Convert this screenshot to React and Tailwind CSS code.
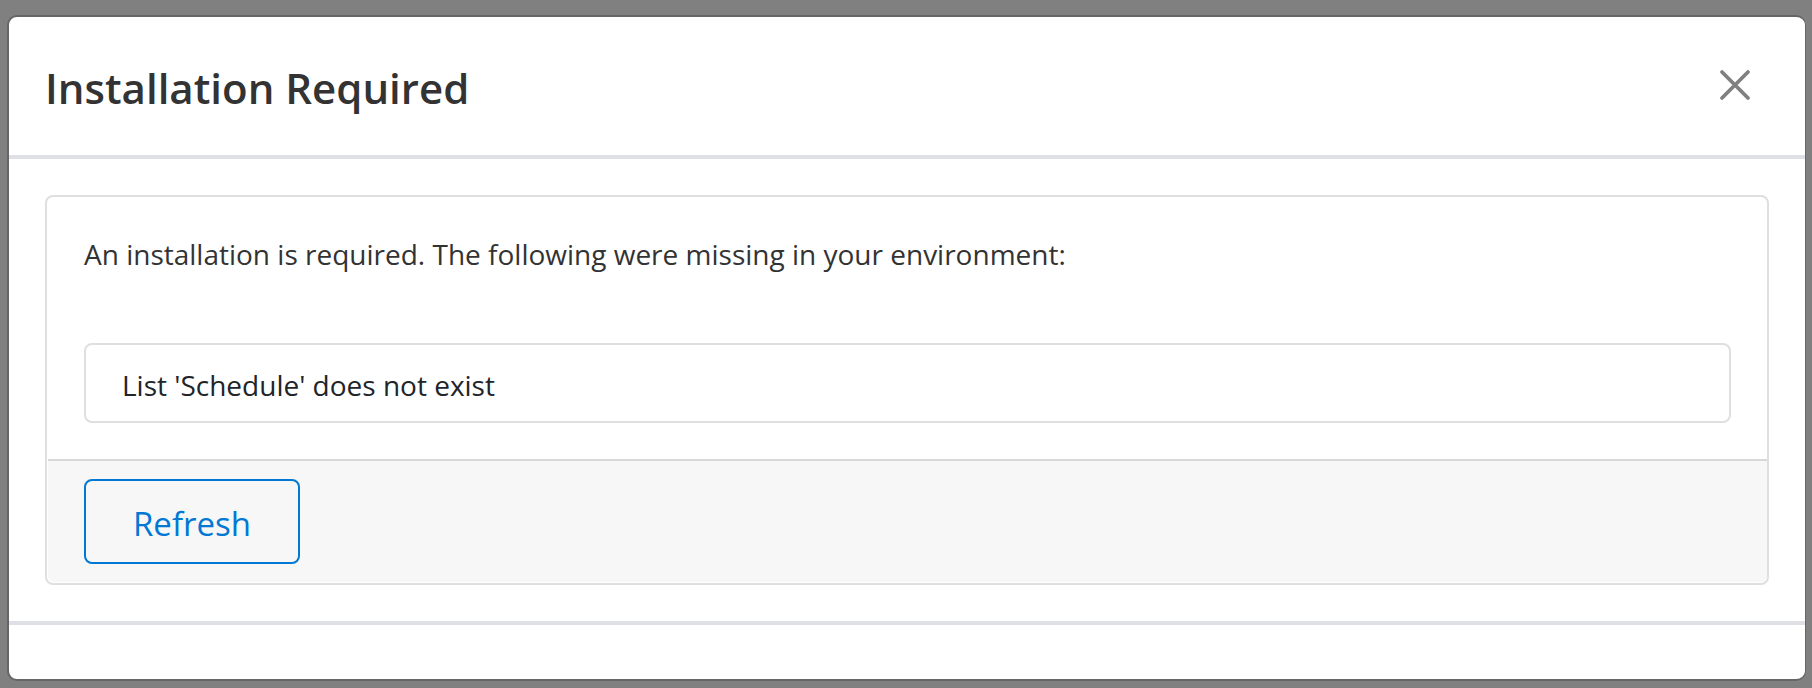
import React from "react";

const missingItems = ["List 'Schedule' does not exist"];

function CloseButton() {
  return (
    <button type="button" aria-label="Close" className="flex size-16 items-center justify-center text-[#808080]">
      <svg viewBox="0 0 32 32" className="size-8" fill="none" stroke="currentColor" strokeWidth="3.8" strokeLinecap="round">
        <path d="M3 3 29 29M29 3 3 29" />
      </svg>
    </button>
  );
}

export default function App() {
  return (
    <div className="min-h-screen bg-[#808080] pt-[15px] pr-[6px] pb-[6px] pl-[7px] font-['Open_Sans','Noto_Sans',sans-serif] text-[#333333]">
      <div role="dialog" aria-labelledby="dialog-title" className="rounded-[10px] border-2 border-r border-[#666666] bg-white">
        <header className="flex items-start justify-between border-b-4 border-[#dee0e6] pt-9 pr-[38px] pb-8 pl-9">
          <h1 id="dialog-title" className="text-[42px] leading-[70px] font-semibold">
            Installation Required
          </h1>
          <CloseButton />
        </header>
        <main className="p-9">
          <section className="rounded-lg border-2 border-[#dfdfdf] pb-px pl-px">
            <div className="px-9 pt-9 pb-9">
              <p className="text-[28px] leading-[42px]">
                An installation is required. The following were missing in your environment:
              </p>
              <ul className="mt-[68px] rounded-lg border-2 border-[#dfdfdf] text-[#212529]">
                {missingItems.map((item) => (
                  <li key={item} className="px-9 pt-[18px] pb-[14px] text-[28px] leading-[44px]">
                    {item}
                  </li>
                ))}
              </ul>
            </div>
            <footer className="flex rounded-b-md border-t-2 border-[#d8d8d8] bg-[#f7f7f7] px-9 py-[18px]">
              <button
                type="button"
                className="rounded-lg border-2 border-[#0078d4] px-[47px] pt-[18px] pb-[14px] text-[33px] leading-[49px] text-[#0078d4]"
              >
                Refresh
              </button>
            </footer>
          </section>
        </main>
        <footer className="h-[58px] border-t-4 border-[#dee0e6]" />
      </div>
    </div>
  );
}
